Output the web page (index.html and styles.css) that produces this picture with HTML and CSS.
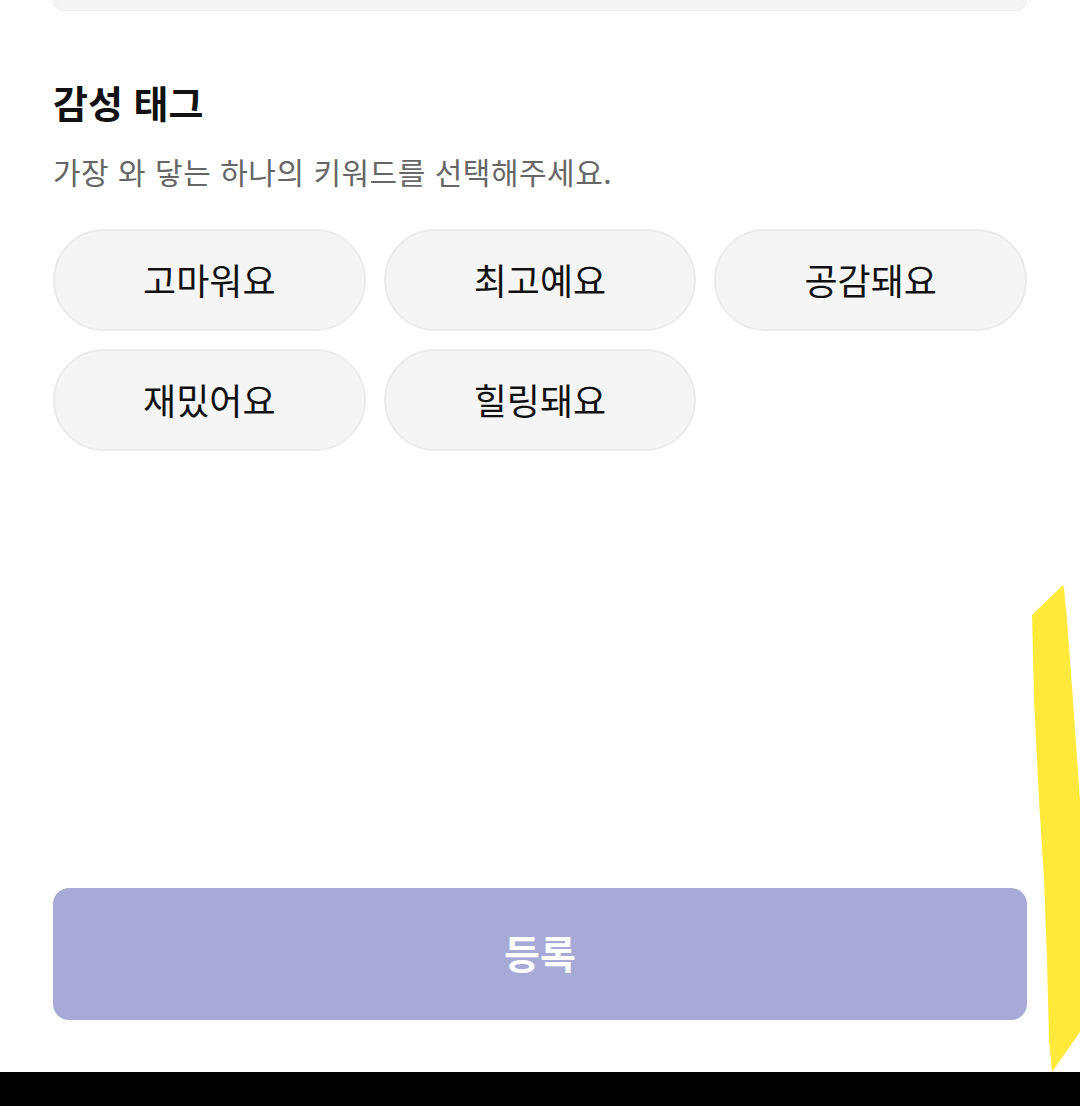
FILE: index.html
```html
<!DOCTYPE html>
<html lang="ko">
<head>
    <meta charset="UTF-8">
    <meta name="viewport" content="width=device-width, initial-scale=1.0">
    <title>감성 태그</title>
    <link rel="stylesheet" href="styles.css">
</head>
<body>

<div class="screen">
    <div class="content">
        <div class="prev-card"></div>

        <h2 class="section-title">감성 태그</h2>
        <p class="section-desc">가장 와 닿는 하나의 키워드를 선택해주세요.</p>

        <div class="tag-grid">
            <button class="tag">고마워요</button>
            <button class="tag">최고예요</button>
            <button class="tag">공감돼요</button>
            <button class="tag">재밌어요</button>
            <button class="tag">힐링돼요</button>
        </div>

        <div class="spacer"></div>

        <button class="submit-btn" disabled>등록</button>
    </div>

    <div class="nav-bar"></div>
</div>

<svg class="marker" width="60" height="500" viewBox="1020 580 60 500">
    <polygon fill="#ffea3b" points="1063,585 1032,615 1034,700 1039,800 1044,880 1047,960 1049,1040 1052,1072 1080,1032 1080,800 1073,700 1067,620 1064,588"/>
</svg>

</body>
</html>
```

FILE: styles.css
```css
body {
    margin: 0;
    padding: 0;
    background-color: #fff;
    font-family: "Noto Sans CJK KR", "Noto Sans", sans-serif;
    color: #111;
}
.screen {
    display: flex;
    flex-direction: column;
    height: 1106px;
}
.content {
    flex: 1;
    display: flex;
    flex-direction: column;
    padding: 0 53px 52px 53px;
}
.prev-card {
    height: 10px;
    background-color: #f5f5f5;
    border: 1px solid #efefef;
    border-top: none;
    border-radius: 0 0 22px 22px;
}
.section-title {
    margin: 69px 0 0 0;
    font-size: 38px;
    font-weight: 700;
    line-height: 44px;
    color: #111;
}
.section-desc {
    margin: 29px 0 0 0;
    font-size: 30px;
    line-height: 36px;
    letter-spacing: 0.5px;
    color: #666;
}
.tag-grid {
    display: grid;
    grid-template-columns: repeat(3, 1fr);
    gap: 18px;
    margin-top: 40px;
}
.tag {
    height: 102px;
    border: 2px solid #ebebeb;
    border-radius: 51px;
    background-color: #f5f5f5;
    font-family: inherit;
    font-size: 36px;
    color: #111;
    padding: 0 0 2px 0;
}
.spacer {
    flex: 1;
}
.submit-btn {
    height: 132px;
    border: none;
    border-radius: 16px;
    background-color: #a7a9d7;
    color: #fff;
    font-family: inherit;
    font-size: 39px;
    font-weight: 700;
    padding: 0 0 4px 0;
}
.nav-bar {
    height: 34px;
    background-color: #000;
}
.marker {
    position: absolute;
    left: 1020px;
    top: 580px;
}
```
